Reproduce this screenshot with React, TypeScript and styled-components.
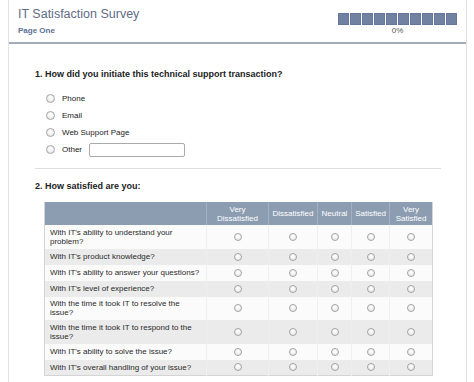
import React from "react";
import styled, { createGlobalStyle } from "styled-components";

const GlobalStyle = createGlobalStyle`
  body {
    margin: 0;
    background: #fff;
    font-family: "Liberation Sans", Arial, Helvetica, sans-serif;
  }
`;

const Page = styled.div`
  margin-left: 8px;
  width: 457px;
  height: 382px;
  border-left: 1px solid #e2e2e2;
  border-right: 1px solid #e2e2e2;
  overflow: hidden;
`;

const Header = styled.div`
  display: flex;
  justify-content: space-between;
  align-items: flex-start;
  height: 39px;
  padding: 3px 9px 0 9px;
  border-bottom: 2px solid #a3aaba;
`;

const Title = styled.h1`
  margin: 3px 0 0;
  font-size: 12.5px;
  line-height: 16px;
  font-weight: normal;
  color: #5f6c86;
`;

const PageName = styled.div`
  margin-top: 4px;
  font-size: 8px;
  line-height: 10px;
  font-weight: bold;
  color: #5b6f96;
`;

const Progress = styled.div`
  margin-top: 10px;
  display: flex;
  flex-direction: column;
  align-items: center;
`;

const Segments = styled.div`
  display: flex;
  gap: 1px;
`;

const Segment = styled.span`
  width: 11px;
  height: 12px;
  background: #7181a2;
  box-shadow: inset 0 0 0 1px #66769a;
`;

const Percent = styled.div`
  margin-top: 1px;
  font-size: 8px;
  line-height: 10px;
  color: #555;
`;

const Body = styled.div`
  padding: 25px 25px 0 26px;
`;

const Question = styled.div`
  font-size: 9px;
  line-height: 11px;
  font-weight: bold;
  color: #222;
`;

const Options = styled.div`
  margin-top: 10px;
  padding-left: 11px;
  display: flex;
  flex-direction: column;
`;

const Option = styled.label`
  display: flex;
  align-items: center;
  height: 17px;
  font-size: 8px;
  color: #222;
`;

const Radio = styled.input.attrs({ type: "radio" })<{ $size: number }>`
  appearance: none;
  display: block;
  margin: 0;
  width: ${({ $size }) => $size}px;
  height: ${({ $size }) => $size}px;
  border-radius: 50%;
  border: 1px solid #a4a4a4;
  background: radial-gradient(circle at 50% 35%, #fff, #e4e4e4);
  flex-shrink: 0;
  &:checked {
    background: radial-gradient(circle, #555 30%, #fff 40%);
  }
`;

const CellRadio = styled(Radio)`
  margin: 0 auto;
`;

const OptionText = styled.span`
  margin-left: 7px;
`;

const OtherInput = styled.input`
  margin-left: 7px;
  width: 96px;
  height: 14px;
  box-sizing: border-box;
  border: 1px solid #aaa;
  border-radius: 2px;
  background: #fff;
`;

const Divider = styled.hr`
  margin: 10px 0 0;
  border: 0;
  border-top: 1px solid #dedede;
`;

const Question2 = styled(Question)`
  margin-top: 12px;
`;

const Grid = styled.table`
  margin: 10px 0 0 9px;
  width: 389px;
  table-layout: fixed;
  border-collapse: collapse;
  border-left: 1px solid #d4d4d4;
  border-right: 1px solid #d4d4d4;
  border-bottom: 1px solid #d4d4d4;
  font-size: 8px;
`;

const HeadCell = styled.th`
  background: #8c9db2;
  color: #fff;
  font-weight: normal;
  line-height: 9px;
  height: 23px;
  padding: 0 2px;
  text-align: center;
  border-left: 1px solid #a3b1c3;
  &:first-child {
    border-left: 0;
  }
`;

const Row = styled.tr<{ $shade: boolean }>`
  height: 16px;
  background: ${({ $shade }) => ($shade ? "#ebebeb" : "#fbfbfb")};
`;

const LabelCell = styled.td`
  padding: 2.75px 5px;
  line-height: 9px;
  vertical-align: middle;
  color: #2a2a2a;
  white-space: nowrap;
`;

const RadioCell = styled.td`
  vertical-align: middle;
  border-left: 1px solid #efefef;
  padding: 0;
  line-height: 0;
`;

const columns = [
  ["Very", "Dissatisfied"],
  ["Dissatisfied"],
  ["Neutral"],
  ["Satisfied"],
  ["Very", "Satisfied"],
];

const rows = [
  ["With IT's ability to understand your", "problem?"],
  ["With IT's product knowledge?"],
  ["With IT's ability to answer your questions?"],
  ["With IT's level of experience?"],
  ["With the time it took IT to resolve the", "issue?"],
  ["With the time it took IT to respond to the", "issue?"],
  ["With IT's ability to solve the issue?"],
  ["With IT's overall handling of your issue?"],
];

const colWidths = [162, 62, 49, 34, 38, 43];

function Lines({ parts }: { parts: string[] }) {
  return (
    <>
      {parts.map((l, j) => (
        <React.Fragment key={j}>
          {j > 0 && <br />}
          {l}
        </React.Fragment>
      ))}
    </>
  );
}

export default function App() {
  return (
    <>
      <GlobalStyle />
      <Page>
        <Header>
          <div>
            <Title>IT Satisfaction Survey</Title>
            <PageName>Page One</PageName>
          </div>
          <Progress>
            <Segments>
              {Array.from({ length: 10 }).map((_, i) => (
                <Segment key={i} />
              ))}
            </Segments>
            <Percent>0%</Percent>
          </Progress>
        </Header>
        <Body>
          <Question>1. How did you initiate this technical support transaction?</Question>
          <Options>
            {["Phone", "Email", "Web Support Page", "Other"].map((o) => (
              <Option key={o}>
                <Radio $size={9} name="initiate" />
                <OptionText>{o}</OptionText>
                {o === "Other" && <OtherInput type="text" />}
              </Option>
            ))}
          </Options>
          <Divider />
          <Question2>2. How satisfied are you:</Question2>
          <Grid>
            <colgroup>
              {colWidths.map((w, i) => (
                <col key={i} style={{ width: w }} />
              ))}
            </colgroup>
            <thead>
              <tr>
                <HeadCell />
                {columns.map((c, i) => (
                  <HeadCell key={i}>
                    <Lines parts={c} />
                  </HeadCell>
                ))}
              </tr>
            </thead>
            <tbody>
              {rows.map((r, i) => (
                <Row key={i} $shade={i % 2 === 1}>
                  <LabelCell>
                    <Lines parts={r} />
                  </LabelCell>
                  {columns.map((_, k) => (
                    <RadioCell key={k}>
                      <CellRadio $size={8} name={`q2-${i}`} />
                    </RadioCell>
                  ))}
                </Row>
              ))}
            </tbody>
          </Grid>
        </Body>
      </Page>
    </>
  );
}
